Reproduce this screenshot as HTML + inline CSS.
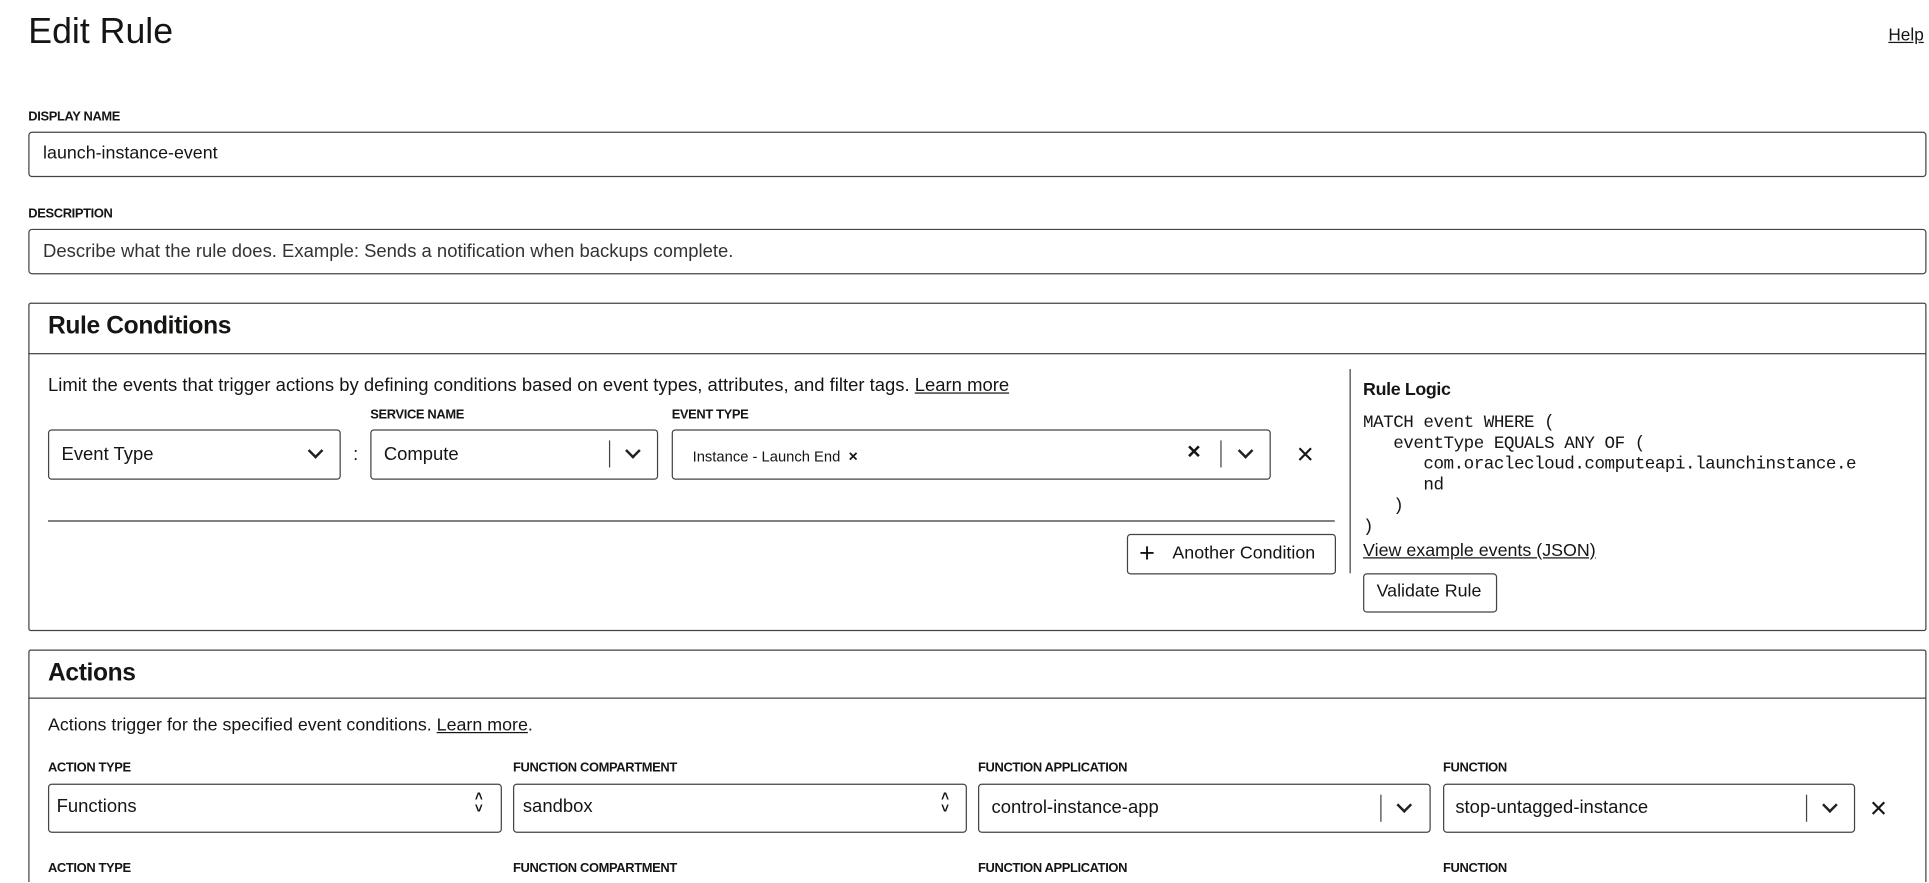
<!DOCTYPE html>
<html><head><meta charset="utf-8"><style>
html,body{margin:0;padding:0;background:#fff;overflow:hidden;width:1929px;height:883px}
#w{position:absolute;left:0;top:0;width:1568px;height:717px;overflow:hidden;transform:scale(1.2302);transform-origin:0 0;font-family:"Liberation Sans",sans-serif;color:#161513}
.a{position:absolute;white-space:nowrap}
.lbl{font-size:10.5px;font-weight:bold;letter-spacing:-0.3px}
.box{position:absolute;border:1px solid #444;border-radius:3px;box-sizing:border-box;background:#fff}
.t{font-size:15px}
u{text-decoration:underline}
.mono{font-family:"Liberation Mono",monospace;font-size:14.3px;line-height:17px;white-space:pre;letter-spacing:-0.4px}
.chev{position:absolute;width:7px;height:7px;border-right:2px solid #222;border-bottom:2px solid #222;transform:rotate(45deg)}
.sep{position:absolute;width:1px;background:#444}
</style></head><body><div id="w">
<div class="a" style="left:23px;top:10px;font-size:29px">Edit Rule</div>
<div class="a" style="left:1535px;top:20px;font-size:14px"><u>Help</u></div>

<div class="a lbl" style="left:23px;top:89px">DISPLAY NAME</div>
<div class="box" style="left:23px;top:107px;width:1543px;height:37px"></div>
<div class="a" style="left:35px;top:117px;font-size:14.5px">launch-instance-event</div>
<div class="a lbl" style="left:23px;top:168px">DESCRIPTION</div>
<div class="box" style="left:23px;top:186px;width:1543px;height:37px"></div>
<div class="a t" style="left:35px;top:196px;color:#333">Describe what the rule does. Example: Sends a notification when backups complete.</div>

<div class="box" style="left:23px;top:246px;width:1543px;height:267px;border-radius:2px"></div>
<div class="a" style="left:23px;top:287px;width:1543px;height:1px;background:#444"></div>
<div class="a" style="left:39px;top:254px;font-size:20px;font-weight:bold;letter-spacing:-0.3px">Rule Conditions</div>
<div class="a t" style="left:39px;top:305px">Limit the events that trigger actions by defining conditions based on event types, attributes, and filter tags. <u>Learn more</u></div>
<div class="a lbl" style="left:301px;top:331px">SERVICE NAME</div>
<div class="a lbl" style="left:546px;top:331px">EVENT TYPE</div>
<div class="box" style="left:39px;top:349px;width:238px;height:41px"></div>
<div class="a t" style="left:50px;top:361px">Event Type</div>
<div class="chev" style="left:252px;top:362px"></div>
<div class="a t" style="left:287px;top:361px">:</div>
<div class="box" style="left:301px;top:349px;width:234px;height:41px"></div>
<div class="a t" style="left:312px;top:361px">Compute</div>
<div class="sep" style="left:495px;top:358px;height:22px"></div>
<div class="chev" style="left:510px;top:362px"></div>
<div class="box" style="left:546px;top:349px;width:487px;height:41px"></div>
<div class="a" style="left:563px;top:363px;font-size:12px">Instance - Launch End &nbsp;<b style="font-size:13px">×</b></div>
<div class="a" style="left:965px;top:357px;font-size:19px;font-weight:bold">×</div>
<div class="sep" style="left:992px;top:358px;height:22px"></div>
<div class="chev" style="left:1008px;top:362px"></div>
<div class="a" style="left:1054px;top:356px;font-size:24px;font-weight:300">×</div>
<div class="a" style="left:39px;top:423px;width:1046px;height:1px;background:#333"></div>
<div class="box" style="left:916px;top:434px;width:170px;height:33px"></div>
<div class="a" style="left:926px;top:437px;font-size:22px;font-weight:300">+</div>
<div class="a" style="left:953px;top:442px;font-size:14.5px">Another Condition</div>
<div class="sep" style="left:1097px;top:300px;height:166px"></div>
<div class="a" style="left:1108px;top:309px;font-size:14.5px;font-weight:bold;letter-spacing:-0.3px">Rule Logic</div>
<div class="a mono" style="left:1108px;top:336px">MATCH event WHERE (
   eventType EQUALS ANY OF (
      com.oraclecloud.computeapi.launchinstance.e
      nd
   )
)</div>
<div class="a" style="left:1108px;top:440px;font-size:14.5px"><u>View example events (JSON)</u></div>
<div class="box" style="left:1108px;top:466px;width:109px;height:32px"></div>
<div class="a" style="left:1119px;top:473px;font-size:14.5px">Validate Rule</div>

<div class="box" style="left:23px;top:528px;width:1543px;height:300px;border-radius:2px"></div>
<div class="a" style="left:23px;top:567px;width:1543px;height:1px;background:#444"></div>
<div class="a" style="left:39px;top:536px;font-size:20px;font-weight:bold;letter-spacing:-0.3px">Actions</div>
<div class="a" style="left:39px;top:582px;font-size:14.5px">Actions trigger for the specified event conditions. <u>Learn more</u>.</div>
<div class="a lbl" style="left:39px;top:618px">ACTION TYPE</div>
<div class="a lbl" style="left:417px;top:618px">FUNCTION COMPARTMENT</div>
<div class="a lbl" style="left:795px;top:618px">FUNCTION APPLICATION</div>
<div class="a lbl" style="left:1173px;top:618px">FUNCTION</div>
<div class="box" style="left:39px;top:637px;width:369px;height:40px"></div>
<div class="a t" style="left:46px;top:647px">Functions</div>
<div class="a" style="left:386px;top:643px;font-size:11px;line-height:10px;font-weight:bold">˄<br>˅</div>
<div class="box" style="left:417px;top:637px;width:369px;height:40px"></div>
<div class="a t" style="left:425px;top:647px">sandbox</div>
<div class="a" style="left:765px;top:643px;font-size:11px;line-height:10px;font-weight:bold">˄<br>˅</div>
<div class="box" style="left:795px;top:637px;width:368px;height:40px"></div>
<div class="a t" style="left:806px;top:648px">control-instance-app</div>
<div class="sep" style="left:1122px;top:646px;height:22px"></div>
<div class="chev" style="left:1137px;top:650px"></div>
<div class="box" style="left:1173px;top:637px;width:335px;height:40px"></div>
<div class="a t" style="left:1183px;top:648px">stop-untagged-instance</div>
<div class="sep" style="left:1468px;top:646px;height:22px"></div>
<div class="chev" style="left:1483px;top:650px"></div>
<div class="a" style="left:1520px;top:644px;font-size:24px;font-weight:300">×</div>
<div class="a lbl" style="left:39px;top:700px">ACTION TYPE</div>
<div class="a lbl" style="left:417px;top:700px">FUNCTION COMPARTMENT</div>
<div class="a lbl" style="left:795px;top:700px">FUNCTION APPLICATION</div>
<div class="a lbl" style="left:1173px;top:700px">FUNCTION</div>
</div></body></html>
